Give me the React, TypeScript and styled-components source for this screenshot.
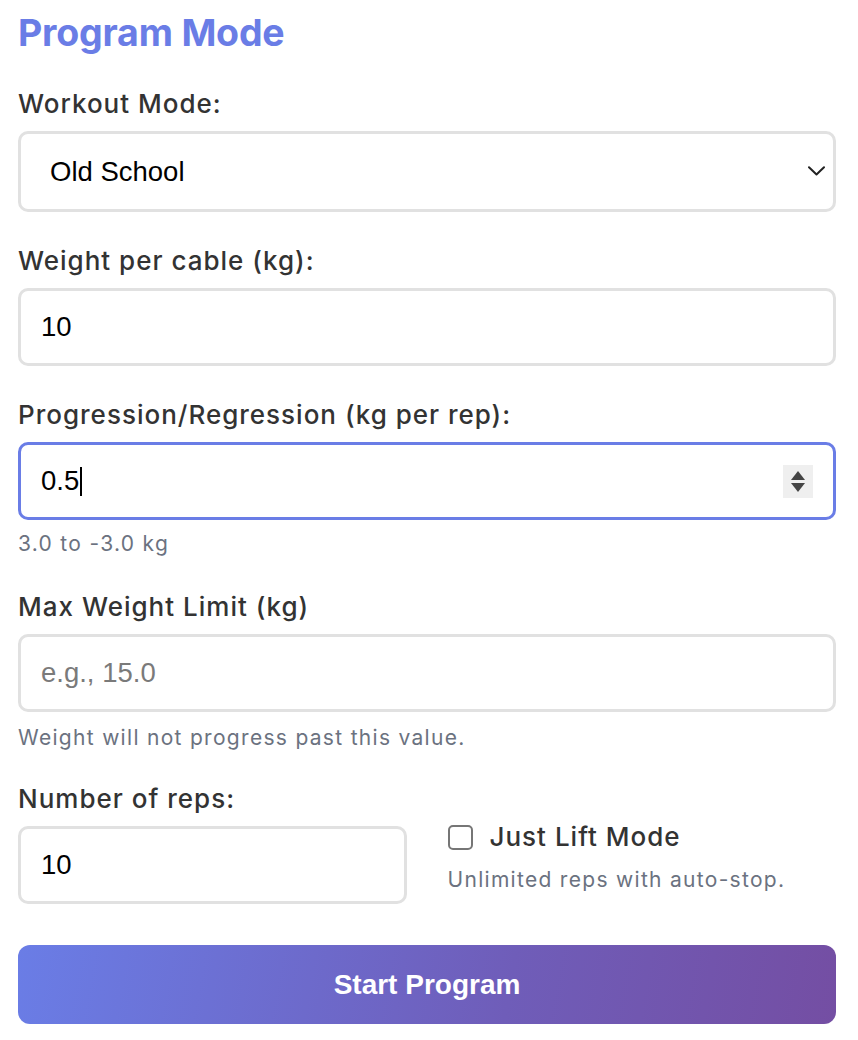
import React from "react";
import styled, { createGlobalStyle } from "styled-components";

const GlobalStyle = createGlobalStyle`
  * { box-sizing: border-box; }
  html, body { margin: 0; padding: 0; background: #ffffff; }
  body { font-family: Inter, "Noto Sans", sans-serif; }
`;

const Page = styled.div`
  padding: 11px 22px 0 18px;
  width: 858px;
`;

const Title = styled.h2`
  margin: 0 0 34px;
  font-family: Inter, sans-serif;
  font-size: 37.5px;
  line-height: 44px;
  font-weight: 700;
  color: #6a7de6;
  letter-spacing: -0.2px;
`;

const Group = styled.div<{ $gap?: number }>`
  margin-bottom: ${(p) => p.$gap ?? 34}px;
`;

const Label = styled.label`
  display: block;
  font-family: Inter, sans-serif;
  font-size: 26px;
  line-height: 30px;
  font-weight: 500;
  letter-spacing: 1px;
  color: #333333;
  margin-bottom: 12px;
`;

const FieldWrap = styled.div`
  position: relative;
`;

const Input = styled.input<{ $focused?: boolean }>`
  display: block;
  width: 100%;
  height: 78px;
  padding: 0 20px;
  border: 3px solid ${(p) => (p.$focused ? "#6a7de6" : "#e1e1e1")};
  border-radius: 10px;
  font-family: "Liberation Sans", Arial, sans-serif;
  font-size: 27.5px;
  color: #000;
  background: #fff;
  outline: none;
  -moz-appearance: textfield;
  &::-webkit-outer-spin-button,
  &::-webkit-inner-spin-button {
    -webkit-appearance: none;
    margin: 0;
  }
  &::placeholder {
    color: #7a7a7a;
  }
`;

const Select = styled.select`
  display: block;
  width: 100%;
  height: 81px;
  padding: 0 50px 0 29px;
  border: 3px solid #e1e1e1;
  border-radius: 10px;
  font-family: "Liberation Sans", Arial, sans-serif;
  font-size: 27.5px;
  color: #000;
  background: #fff;
  appearance: none;
  -webkit-appearance: none;
  outline: none;
`;

const Chevron = styled.svg`
  position: absolute;
  right: 11px;
  top: 35px;
  width: 17px;
  height: 10px;
  pointer-events: none;
`;

const Spinner = styled.div`
  position: absolute;
  right: 23px;
  top: 23px;
  width: 30px;
  height: 33px;
  background: #efefef;
  display: flex;
  flex-direction: column;
  align-items: center;
  justify-content: center;
  gap: 3px;
  pointer-events: none;
`;

const Caret = styled.span`
  position: absolute;
  left: 62px;
  top: 25px;
  width: 2px;
  height: 29px;
  background: #000;
  pointer-events: none;
`;

const Hint = styled.div<{ $mt?: number }>`
  margin-top: ${(p) => p.$mt ?? 11}px;
  font-family: Inter, sans-serif;
  font-size: 21px;
  line-height: 26px;
  letter-spacing: 1.3px;
  color: #6b7280;
`;

const Row = styled.div`
  display: grid;
  grid-template-columns: 1fr 1fr;
  column-gap: 41px;
  margin-bottom: 41px;
`;

const SideCol = styled.div`
  padding-top: 38px;
`;

const CheckLine = styled.label`
  display: flex;
  align-items: center;
  gap: 17px;
  font-family: Inter, sans-serif;
  font-size: 26px;
  line-height: 30px;
  font-weight: 500;
  letter-spacing: 1px;
  color: #333333;
`;

const Box = styled.span`
  display: inline-block;
  width: 25px;
  height: 25px;
  border: 2px solid #767676;
  border-radius: 5px;
  background: #fff;
  flex: none;
`;

const StartButton = styled.button`
  display: block;
  width: 100%;
  height: 79px;
  border: none;
  border-radius: 12px;
  background: linear-gradient(100deg, #6a7de6 0%, #6f5db9 60%, #744ea3 100%);
  color: #fff;
  font-family: "Liberation Sans", Arial, sans-serif;
  font-weight: 700;
  font-size: 28px;
  cursor: pointer;
`;

export default function App() {
  return (
    <>
      <GlobalStyle />
      <Page>
        <Title>Program Mode</Title>

        <Group>
          <Label>Workout Mode:</Label>
          <FieldWrap>
            <Select defaultValue="old">
              <option value="old">Old School</option>
              <option value="pump">Pump</option>
              <option value="tut">TUT</option>
              <option value="echo">Echo</option>
            </Select>
            <Chevron viewBox="0 0 17 10" fill="none">
              <path d="M1 1.2 L8.5 8.5 L16 1.2" stroke="#222" strokeWidth="2" strokeLinecap="round" strokeLinejoin="round" />
            </Chevron>
          </FieldWrap>
        </Group>

        <Group>
          <Label>Weight per cable (kg):</Label>
          <Input type="number" defaultValue="10" />
        </Group>

        <Group $gap={35}>
          <Label>Progression/Regression (kg per rep):</Label>
          <FieldWrap>
            <Input type="number" defaultValue="0.5" $focused />
            <Caret />
            <Spinner>
              <svg width="14" height="9" viewBox="0 0 14 9">
                <path d="M7 0 L14 9 L0 9 Z" fill="#444" />
              </svg>
              <svg width="14" height="9" viewBox="0 0 14 9">
                <path d="M0 0 L14 0 L7 9 Z" fill="#444" />
              </svg>
            </Spinner>
          </FieldWrap>
          <Hint>3.0 to -3.0 kg</Hint>
        </Group>

        <Group $gap={33}>
          <Label>Max Weight Limit (kg)</Label>
          <Input type="number" placeholder="e.g., 15.0" />
          <Hint $mt={13}>Weight will not progress past this value.</Hint>
        </Group>

        <Row>
          <div>
            <Label>Number of reps:</Label>
            <Input type="number" defaultValue="10" />
          </div>
          <SideCol>
            <CheckLine>
              <Box />
              Just Lift Mode
            </CheckLine>
            <Hint $mt={15}>Unlimited reps with auto-stop.</Hint>
          </SideCol>
        </Row>

        <StartButton>Start Program</StartButton>
      </Page>
    </>
  );
}
